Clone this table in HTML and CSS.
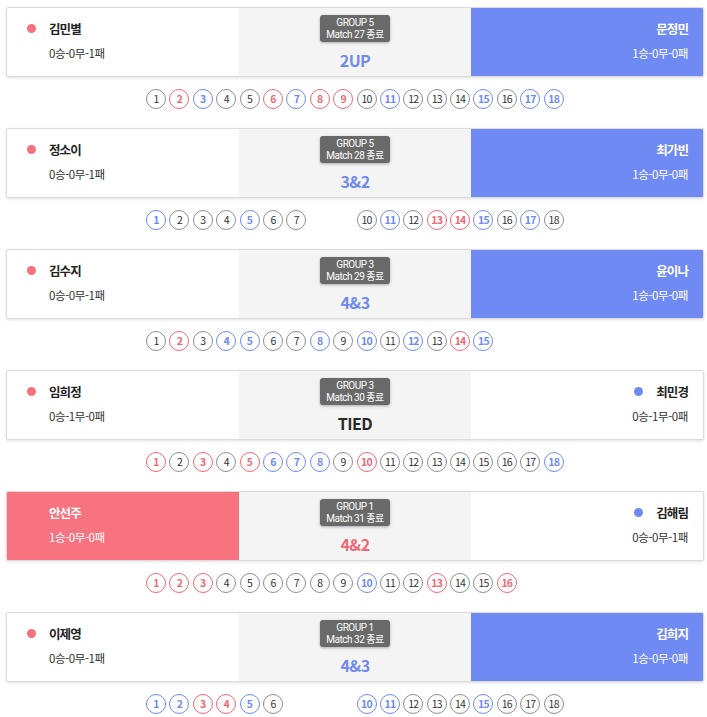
FILE: index.html
```html
<!DOCTYPE html>
<html lang="ko">
<head>
<meta charset="utf-8">
<title>Match Results</title>
<link rel="stylesheet" href="styles.css">
</head>
<body>
<div class="list">

  <div class="match">
    <div class="card">
      <div class="side left"><div class="name"><span class="dot red"></span>김민별</div><div class="rec">0승-0무-1패</div></div>
      <div class="mid"><div class="badge"><div class="bl">GROUP 5</div><div class="bl">Match 27 종료</div></div><div class="score blue">2UP</div></div>
      <div class="side right win-blue"><div class="name">문정민</div><div class="rec">1승-0무-0패</div></div>
    </div>
    <div class="holes">
      <span class="h">1</span><span class="h r">2</span><span class="h b">3</span><span class="h">4</span><span class="h">5</span><span class="h r">6</span><span class="h b">7</span><span class="h r">8</span><span class="h r">9</span><span class="h">10</span><span class="h b">11</span><span class="h">12</span><span class="h">13</span><span class="h">14</span><span class="h b">15</span><span class="h">16</span><span class="h b">17</span><span class="h b">18</span>
    </div>
  </div>

  <div class="match">
    <div class="card">
      <div class="side left"><div class="name"><span class="dot red"></span>정소이</div><div class="rec">0승-0무-1패</div></div>
      <div class="mid"><div class="badge"><div class="bl">GROUP 5</div><div class="bl">Match 28 종료</div></div><div class="score blue">3&amp;2</div></div>
      <div class="side right win-blue"><div class="name">최가빈</div><div class="rec">1승-0무-0패</div></div>
    </div>
    <div class="holes">
      <span class="h b">1</span><span class="h">2</span><span class="h">3</span><span class="h">4</span><span class="h b">5</span><span class="h">6</span><span class="h">7</span><span class="h x">8</span><span class="h x">9</span><span class="h">10</span><span class="h b">11</span><span class="h">12</span><span class="h r">13</span><span class="h r">14</span><span class="h b">15</span><span class="h">16</span><span class="h b">17</span><span class="h">18</span>
    </div>
  </div>

  <div class="match">
    <div class="card">
      <div class="side left"><div class="name"><span class="dot red"></span>김수지</div><div class="rec">0승-0무-1패</div></div>
      <div class="mid"><div class="badge"><div class="bl">GROUP 3</div><div class="bl">Match 29 종료</div></div><div class="score blue">4&amp;3</div></div>
      <div class="side right win-blue"><div class="name">윤이나</div><div class="rec">1승-0무-0패</div></div>
    </div>
    <div class="holes">
      <span class="h">1</span><span class="h r">2</span><span class="h">3</span><span class="h b">4</span><span class="h b">5</span><span class="h">6</span><span class="h">7</span><span class="h b">8</span><span class="h">9</span><span class="h b">10</span><span class="h">11</span><span class="h b">12</span><span class="h">13</span><span class="h r">14</span><span class="h b">15</span>
    </div>
  </div>

  <div class="match">
    <div class="card">
      <div class="side left"><div class="name"><span class="dot red"></span>임희정</div><div class="rec">0승-1무-0패</div></div>
      <div class="mid"><div class="badge"><div class="bl">GROUP 3</div><div class="bl">Match 30 종료</div></div><div class="score dark">TIED</div></div>
      <div class="side right"><div class="name"><span class="dot blue-dot"></span>최민경</div><div class="rec">0승-1무-0패</div></div>
    </div>
    <div class="holes">
      <span class="h r">1</span><span class="h">2</span><span class="h r">3</span><span class="h">4</span><span class="h r">5</span><span class="h b">6</span><span class="h b">7</span><span class="h b">8</span><span class="h">9</span><span class="h r">10</span><span class="h">11</span><span class="h">12</span><span class="h">13</span><span class="h">14</span><span class="h">15</span><span class="h">16</span><span class="h">17</span><span class="h b">18</span>
    </div>
  </div>

  <div class="match">
    <div class="card">
      <div class="side left win-red"><div class="name">안선주</div><div class="rec">1승-0무-0패</div></div>
      <div class="mid"><div class="badge"><div class="bl">GROUP 1</div><div class="bl">Match 31 종료</div></div><div class="score red-text">4&amp;2</div></div>
      <div class="side right"><div class="name"><span class="dot blue-dot"></span>김해림</div><div class="rec">0승-0무-1패</div></div>
    </div>
    <div class="holes">
      <span class="h r">1</span><span class="h r">2</span><span class="h r">3</span><span class="h">4</span><span class="h">5</span><span class="h">6</span><span class="h">7</span><span class="h">8</span><span class="h">9</span><span class="h b">10</span><span class="h">11</span><span class="h">12</span><span class="h r">13</span><span class="h">14</span><span class="h">15</span><span class="h r">16</span>
    </div>
  </div>

  <div class="match">
    <div class="card">
      <div class="side left"><div class="name"><span class="dot red"></span>이제영</div><div class="rec">0승-0무-1패</div></div>
      <div class="mid"><div class="badge"><div class="bl">GROUP 1</div><div class="bl">Match 32 종료</div></div><div class="score blue">4&amp;3</div></div>
      <div class="side right win-blue"><div class="name">김희지</div><div class="rec">1승-0무-0패</div></div>
    </div>
    <div class="holes">
      <span class="h b">1</span><span class="h b">2</span><span class="h r">3</span><span class="h r">4</span><span class="h b">5</span><span class="h">6</span><span class="h x">7</span><span class="h x">8</span><span class="h x">9</span><span class="h b">10</span><span class="h b">11</span><span class="h">12</span><span class="h">13</span><span class="h">14</span><span class="h b">15</span><span class="h">16</span><span class="h">17</span><span class="h">18</span>
    </div>
  </div>

</div>
</body>
</html>
```
FILE: styles.css
```css
* { box-sizing: border-box; }

body {
  margin: 0;
  background: #fff;
  font-family: "Noto Sans CJK KR", "Noto Sans", sans-serif;
  color: #222;
}

.list {
  padding: 7px 3px 0 6px;
}

.match {
  margin-bottom: 19px;
}

.card {
  display: grid;
  grid-template-columns: 1fr 1fr 1fr;
  height: 70px;
  border: 1px solid #dcdcdc;
  border-radius: 2px;
  background: #fff;
  box-shadow: 0 1px 3px rgba(0, 0, 0, 0.12);
  overflow: hidden;
}

.side {
  padding: 11px 15px 0 42px;
}

.side.right {
  padding: 11px 15px 0 20px;
  text-align: right;
}

.name {
  display: flex;
  align-items: center;
  height: 18px;
  font-size: 12.5px;
  font-weight: 700;
  letter-spacing: -0.9px;
  color: #222;
}

.right .name {
  justify-content: flex-end;
}

.rec {
  margin-top: 8px;
  line-height: 16px;
  font-size: 11.5px;
  letter-spacing: -0.4px;
  color: #333;
}

.dot {
  display: inline-block;
  width: 9px;
  height: 9px;
  border-radius: 50%;
  margin-left: -22px;
  margin-right: 13px;
}

.right .dot {
  margin-left: 0;
}

.dot.red { background: #f5717e; }
.dot.blue-dot { background: #6f8af2; }

.win-blue {
  background: #6f8af2;
}

.win-red {
  background: #f6737f;
}

.win-blue .name, .win-blue .rec,
.win-red .name, .win-red .rec {
  color: #fff;
}

.mid {
  background: #f4f4f4;
  display: flex;
  flex-direction: column;
  align-items: center;
}

.badge {
  margin-top: 7px;
  height: 27px;
  padding: 1.5px 6px 0;
  background: #696969;
  border-radius: 3px;
  box-shadow: 0 1px 3px rgba(0, 0, 0, 0.3);
  color: #fff;
  font-family: Roboto, "Noto Sans CJK KR", sans-serif;
  font-size: 10px;
  letter-spacing: -0.5px;
  text-align: center;
}

.bl {
  height: 12px;
  line-height: 12px;
  white-space: nowrap;
}

.score {
  margin-top: 8px;
  line-height: 20px;
  font-size: 16px;
  font-weight: 700;
  letter-spacing: -0.5px;
}

.score.blue { color: #6f8af2; }
.score.dark { color: #2a2a2a; }
.score.red-text { color: #f06876; }

.holes {
  display: flex;
  gap: 3.4px;
  width: 418px;
  margin: 12px auto 0;
  height: 20px;
}

.h {
  flex: none;
  width: 20px;
  height: 20px;
  border: 1px solid #8e8e8e;
  border-radius: 50%;
  display: flex;
  align-items: center;
  justify-content: center;
  font-size: 10.5px;
  letter-spacing: -0.8px;
  color: #333;
  line-height: 1;
}

.h.r {
  border-color: #f06876;
  color: #f06876;
  font-weight: 700;
}

.h.b {
  border-color: #6f8af2;
  color: #6f8af2;
  font-weight: 700;
}

.h.x {
  visibility: hidden;
}
```
